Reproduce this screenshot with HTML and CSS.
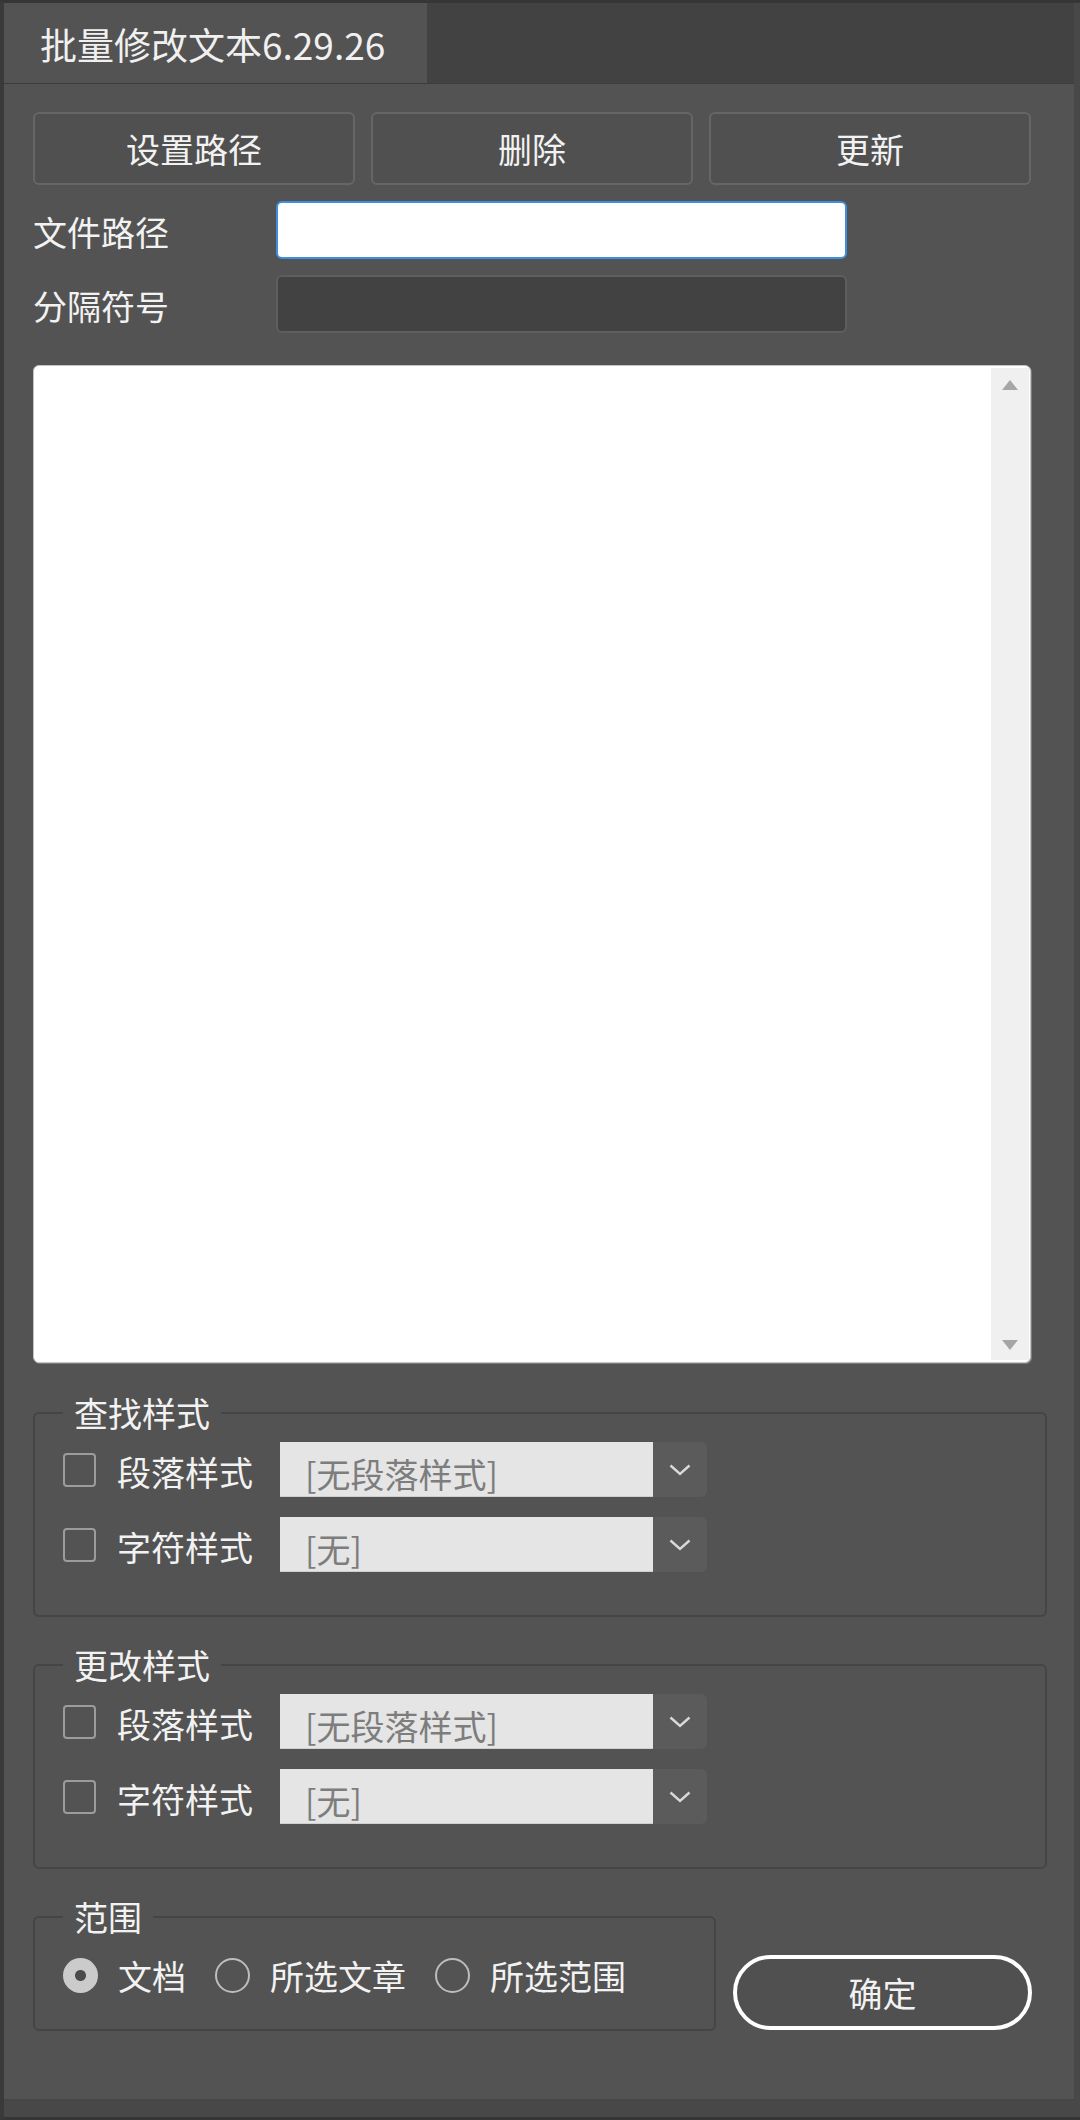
FILE: index.html
```html
<!DOCTYPE html>
<html lang="zh-CN">
<head>
<meta charset="utf-8">
<title>批量修改文本6.29.26</title>
<link rel="stylesheet" href="styles.css">
</head>
<body>
<div class="frame">
  <div class="tabbar">
    <div class="tab">批量修改文本6.29.26</div>
  </div>
  <div class="panel">
    <div class="toolbar">
      <button class="btn">设置路径</button>
      <button class="btn">删除</button>
      <button class="btn">更新</button>
    </div>
    <div class="field">
      <span class="field-label">文件路径</span>
      <div class="input input-focus"></div>
    </div>
    <div class="field">
      <span class="field-label">分隔符号</span>
      <div class="input input-dark"></div>
    </div>
    <div class="list">
      <div class="scrollbar">
        <svg class="arrow" width="16" height="10" viewBox="0 0 16 10"><polygon points="8,0 16,10 0,10" fill="#a6a6a6"/></svg>
        <svg class="arrow" width="16" height="10" viewBox="0 0 16 10"><polygon points="0,0 16,0 8,10" fill="#a6a6a6"/></svg>
      </div>
    </div>

    <fieldset class="group">
      <legend>查找样式</legend>
      <div class="style-row">
        <span class="checkbox"></span>
        <span class="row-label">段落样式</span>
        <div class="dropdown">
          <span class="dropdown-value">[无段落样式]</span>
          <span class="dropdown-btn"><svg width="22" height="12" viewBox="0 0 22 12"><polyline points="1.5,1.5 11,10 20.5,1.5" fill="none" stroke="#d9d9d9" stroke-width="2.4"/></svg></span>
        </div>
      </div>
      <div class="style-row">
        <span class="checkbox"></span>
        <span class="row-label">字符样式</span>
        <div class="dropdown">
          <span class="dropdown-value">[无]</span>
          <span class="dropdown-btn"><svg width="22" height="12" viewBox="0 0 22 12"><polyline points="1.5,1.5 11,10 20.5,1.5" fill="none" stroke="#d9d9d9" stroke-width="2.4"/></svg></span>
        </div>
      </div>
    </fieldset>

    <fieldset class="group group-change">
      <legend>更改样式</legend>
      <div class="style-row">
        <span class="checkbox"></span>
        <span class="row-label">段落样式</span>
        <div class="dropdown">
          <span class="dropdown-value">[无段落样式]</span>
          <span class="dropdown-btn"><svg width="22" height="12" viewBox="0 0 22 12"><polyline points="1.5,1.5 11,10 20.5,1.5" fill="none" stroke="#d9d9d9" stroke-width="2.4"/></svg></span>
        </div>
      </div>
      <div class="style-row">
        <span class="checkbox"></span>
        <span class="row-label">字符样式</span>
        <div class="dropdown">
          <span class="dropdown-value">[无]</span>
          <span class="dropdown-btn"><svg width="22" height="12" viewBox="0 0 22 12"><polyline points="1.5,1.5 11,10 20.5,1.5" fill="none" stroke="#d9d9d9" stroke-width="2.4"/></svg></span>
        </div>
      </div>
    </fieldset>

    <div class="bottom">
      <fieldset class="group range">
        <legend>范围</legend>
        <div class="radio-row">
          <span class="radio radio-on"></span><span class="radio-label">文档</span>
          <span class="radio"></span><span class="radio-label">所选文章</span>
          <span class="radio"></span><span class="radio-label">所选范围</span>
        </div>
      </fieldset>
      <button class="confirm">确定</button>
    </div>
  </div>
</div>
</body>
</html>
```

FILE: styles.css
```css
html, body {
  margin: 0;
  padding: 0;
}

body {
  width: 1080px;
  height: 2120px;
  overflow: hidden;
  background: #484848;
  font-family: "Noto Sans CJK SC", "Noto Sans", sans-serif;
  color: #f2f2f2;
}

.frame {
  height: 2120px;
  box-sizing: border-box;
  border-top: 3px solid #363636;
  border-left: 4px solid #3a3a3a;
  border-bottom: 3px solid #363636;
  padding-right: 6px;
  display: flex;
  flex-direction: column;
}

.tabbar {
  height: 80px;
  display: flex;
  background: #424242;
  border-bottom: 1px solid #3c3c3c;
}

.tab {
  width: 423px;
  background: #535353;
  display: flex;
  align-items: center;
  padding-left: 36px;
  padding-top: 2px;
  box-sizing: border-box;
  font-size: 37px;
  color: #f0f0f0;
}

.panel {
  height: 2017px;
  box-sizing: border-box;
  background: #535353;
  padding: 28px 27px 0 29px;
  border-bottom: 2px solid #464646;
}

.toolbar {
  display: grid;
  grid-template-columns: 1fr 1fr 1fr;
  gap: 16px;
  margin-right: 16px;
}

.btn {
  height: 73px;
  background: #505050;
  border: 2px solid #666666;
  border-radius: 6px;
  color: #f2f2f2;
  font-family: inherit;
  font-size: 34px;
  padding: 0;
}

.field {
  display: flex;
  align-items: center;
  margin-top: 16px;
}

.field-label {
  width: 243px;
  font-size: 34px;
  line-height: 40px;
  padding-top: 4px;
}

.input {
  width: 571px;
  height: 58px;
  box-sizing: border-box;
  border-radius: 6px;
}

.input-focus {
  background: #ffffff;
  border: 2px solid #3f8fe0;
}

.input-dark {
  background: #424242;
  border: 2px solid #5e5e5e;
}

.list {
  margin-top: 32px;
  margin-right: 16px;
  height: 998px;
  box-sizing: border-box;
  background: #ffffff;
  border: 1px solid #c4c4c4;
  border-radius: 6px;
  box-shadow: 1px 1px 0 #7c7c7c;
  display: flex;
  justify-content: flex-end;
  padding: 2px 1px 2px 0;
}

.scrollbar {
  width: 38px;
  background: #f0f0f0;
  display: flex;
  flex-direction: column;
  justify-content: space-between;
  align-items: center;
  padding: 12px 0 10px;
}

.arrow {
  display: block;
}

.group {
  margin: 30px 0 0 0;
  min-width: 0;
  border: 2px solid #454545;
  border-radius: 6px;
  padding: 9px 28px 43px 28px;
}

.group-change {
  margin-top: 28px;
}

.group legend {
  padding: 0 11px;
  font-size: 34px;
  line-height: 40px;
  color: #f2f2f2;
}

.style-row {
  display: flex;
  align-items: center;
  height: 55px;
}

.style-row + .style-row {
  margin-top: 20px;
}

.checkbox {
  width: 33px;
  height: 34px;
  box-sizing: border-box;
  border: 2px solid #9c9c9c;
  border-radius: 4px;
}

.row-label {
  margin-left: 21px;
  width: 136px;
  font-size: 34px;
  line-height: 40px;
  padding-top: 4px;
  white-space: nowrap;
}

.dropdown {
  margin-left: 27px;
  width: 427px;
  height: 55px;
  display: flex;
  background: #5b5b5b;
  border-radius: 6px;
}

.dropdown-value {
  flex: 1;
  background: #e5e5e5;
  color: #7d7d7d;
  font-size: 34px;
  line-height: 55px;
  padding-left: 25px;
  padding-top: 4px;
  box-sizing: border-box;
  border-bottom: 1px solid #cfcfcf;
}

.dropdown-btn {
  width: 54px;
  display: flex;
  align-items: center;
  justify-content: center;
}

.bottom {
  display: flex;
  align-items: flex-end;
  margin-top: 28px;
}

.range {
  margin-top: 0;
  width: 683px;
  box-sizing: border-box;
  padding: 20px 28px 36px 28px;
}

.radio-row {
  display: flex;
  align-items: center;
  height: 36px;
}

.radio {
  width: 35px;
  height: 35px;
  box-sizing: border-box;
  border-radius: 50%;
  border: 2px solid #bdbdbd;
  flex: none;
}

.radio-on {
  border: none;
  background: radial-gradient(circle, #4a4a4a 0 5px, #cbcbcb 6px);
}

.radio-label {
  margin-left: 20px;
  margin-right: 29px;
  font-size: 34px;
  line-height: 40px;
  padding-top: 2px;
  white-space: nowrap;
}

.confirm {
  margin-left: 17px;
  margin-bottom: 1px;
  width: 299px;
  height: 75px;
  box-sizing: border-box;
  background: #505050;
  border: 4px solid #ffffff;
  border-radius: 40px;
  color: #f2f2f2;
  font-family: inherit;
  font-size: 34px;
  padding: 0;
}
```
